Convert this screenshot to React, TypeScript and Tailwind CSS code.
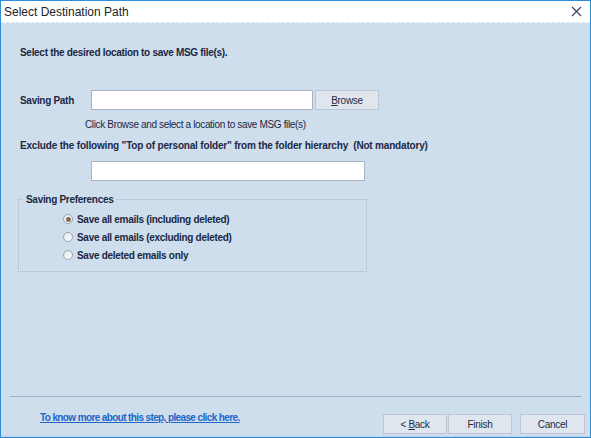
import React from "react";

const font = { fontFamily: '"Liberation Sans", Arial, sans-serif' };

function Radio({ checked }: { checked?: boolean }) {
  return (
    <span className="flex h-[10px] w-[10px] items-center justify-center rounded-full border border-[#9aa6b4] bg-gradient-to-br from-[#e4e8ee] to-[#fbfcfd]">
      {checked && <span className="h-[5px] w-[5px] rounded-full bg-[#8a6a56]" />}
    </span>
  );
}

function Btn({ children, className = "" }: { children: React.ReactNode; className?: string }) {
  return (
    <button
      className={
        "flex h-[20px] w-[64px] items-center justify-center border border-[#bcc7d3] bg-[#dfe6ee] text-[10px] tracking-[-0.3px] text-[#1c2a45] " +
        className
      }
    >
      {children}
    </button>
  );
}

export default function App() {
  const options = [
    "Save all emails (including deleted)",
    "Save all emails (excluding deleted)",
    "Save deleted emails only",
  ];
  return (
    <div style={font} className="flex h-[438px] w-[591px] flex-col border border-[#2b8fdb] bg-[#cfdeed] text-[#1a2844]">
      <div className="flex h-[22px] items-center justify-between border-b border-dashed border-[#dde6f0] bg-white pl-[3px] pr-[6px]">
        <span className="text-[12px] text-[#222]">Select Destination Path</span>
        <svg width="11" height="11" viewBox="0 0 11 11" className="mr-[2px]">
          <path d="M1 1 L10 10 M10 1 L1 10" stroke="#3a4660" strokeWidth="1.2" />
        </svg>
      </div>

      <div className="flex flex-1 flex-col">
        <p className="ml-[19px] mt-[24px] h-[12px] text-[10px] font-bold leading-[12px] tracking-[-0.3px]">
          Select the desired location to save MSG file(s).
        </p>

        <div className="mt-[31px] flex h-[20px] items-center">
          <span className="ml-[19px] w-[71px] text-[10px] font-bold tracking-[-0.3px]">Saving Path</span>
          <div className="h-[20px] w-[222px] border border-[#a9b4c1] bg-white" />
          <Btn className="ml-[2px]">
            <span>
              <span className="underline">B</span>rowse
            </span>
          </Btn>
        </div>

        <p className="ml-[84px] mt-[9px] h-[12px] text-[10px] leading-[12px] tracking-[-0.35px]">
          Click Browse and select a location to save MSG file(s)
        </p>

        <p className="ml-[19px] mt-[9px] h-[12px] whitespace-pre text-[10px] font-bold leading-[12px] tracking-[-0.18px]">
          Exclude the following "Top of personal folder" from the folder hierarchy  (Not mandatory)
        </p>

        <div className="ml-[90px] mt-[9px] h-[20px] w-[274px] border border-[#a9b4c1] bg-white" />

        <fieldset className="ml-[17px] mt-[11px] h-[80px] w-[349px] border border-dotted border-[#aab6c4]">
          <legend className="ml-[5px] px-[2px] text-[10px] font-bold tracking-[-0.3px]">Saving Preferences</legend>
          <div className="ml-[44px] mt-[6px] flex flex-col gap-[6px]">
            {options.map((o, i) => (
              <label key={o} className="flex h-[12px] items-center gap-[4px] text-[10px] font-bold tracking-[-0.3px]">
                <Radio checked={i === 0} />
                {o}
              </label>
            ))}
          </div>
        </fieldset>

        <div className="mx-[9px] mt-auto border-t border-[#9fb0c4]" />

        <div className="flex h-[39px] items-start pr-[5px]">
          <a className="ml-[39px] mt-[15px] text-[10px] leading-[12px] font-bold tracking-[-0.62px] text-[#2166c6] underline">
            To know more about this step, please click here.
          </a>
          <div className="ml-auto mt-[17px] flex">
            <Btn>
              <span>
                &lt; <span className="underline">B</span>ack
              </span>
            </Btn>
            <Btn className="ml-[1px]">Finish</Btn>
            <Btn className="ml-[8px] w-[65px]">Cancel</Btn>
          </div>
        </div>
        <div className="border-t border-dotted border-[#b8c6d6]" />
      </div>
    </div>
  );
}
